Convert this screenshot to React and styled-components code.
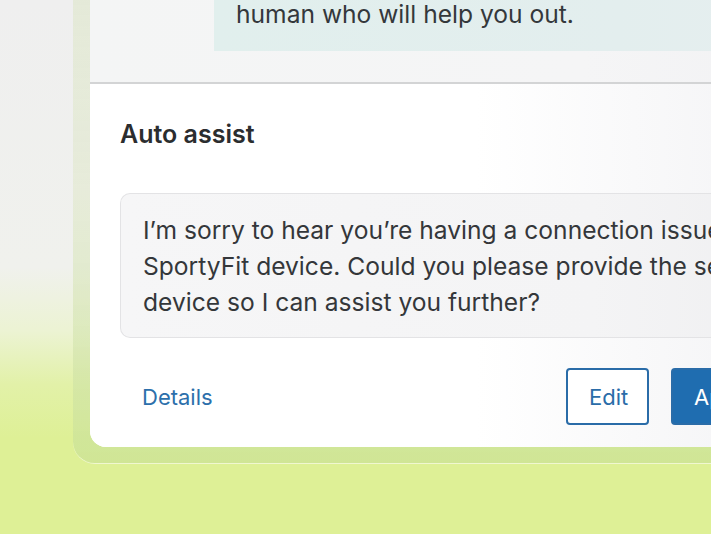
import React from "react";
import styled, { createGlobalStyle } from "styled-components";

const Global = createGlobalStyle`
  html, body { margin: 0; padding: 0; }
  body { font-family: Inter, "Noto Sans", sans-serif; color: #2f3133; }
`;

const Page = styled.div`
  width: 711px;
  height: 534px;
  overflow: hidden;
  display: flex;
  align-items: flex-end;
  box-sizing: border-box;
  padding: 0 0 70px 73px;
  background: linear-gradient(180deg, #efefef 0%, #f0f1ed 50%, #ecf3d3 62%, #e2f1a8 72%, #def096 82%, #def096 100%);
`;

const Frame = styled.div`
  flex-shrink: 0;
  width: 720px;
  box-sizing: border-box;
  padding: 0 0 16px 17px;
  border-bottom-left-radius: 22px;
  background: linear-gradient(180deg, rgba(222, 230, 205, 0.7) 0%, rgba(225, 232, 205, 0.6) 50%, rgba(200, 224, 150, 0.65) 100%);
  border-bottom: 1.5px solid rgba(240, 248, 210, 0.95);
`;

const Card = styled.div`
  background: #fff;
  border-bottom-left-radius: 16px;
  overflow: hidden;
  display: flex;
  flex-direction: column;
`;

const Conversation = styled.div`
  background: linear-gradient(90deg, #f4f5f5 0%, #f5f5f6 70%, #f2f2f4 100%);
  padding: 0 0 31px 124px;
  border-bottom: 2px solid #d3d4d5;
`;

const Bubble = styled.div`
  background: linear-gradient(90deg, #e1efed 0%, #e3eeee 70%, #e6eeef 100%);
  padding: 14px 22px 20px;
  font-size: 24.6px;
  line-height: 34px;
  color: #34383b;
`;

const Assist = styled.div`
  background: linear-gradient(90deg, #ffffff 0%, #ffffff 55%, #f3f3f5 100%);
  padding: 35px 0 22px 30px;
  display: flex;
  flex-direction: column;
`;

const Title = styled.h2`
  margin: 0;
  font-size: 25px;
  line-height: 30px;
  font-weight: 600;
  color: #2b2d2f;
`;

const Suggestion = styled.div`
  margin-top: 44px;
  background: linear-gradient(90deg, #f6f6f7 0%, #f4f4f5 70%, #efeff1 100%);
  border: 1px solid #e3e3e5;
  border-right: none;
  border-radius: 10px 0 0 10px;
  padding: 18px 0 17px 22px;
  font-size: 24.6px;
  line-height: 36px;
  color: #34373a;
  white-space: nowrap;
`;

const Actions = styled.div`
  margin-top: 30px;
  display: flex;
  align-items: center;
  padding-left: 22px;
`;

const LinkButton = styled.button`
  border: none;
  background: none;
  padding: 0;
  font-family: inherit;
  font-size: 22px;
  color: #2c6fab;
  cursor: pointer;
`;

const Spacer = styled.div`
  flex: 1;
`;

const Button = styled.button`
  font-family: inherit;
  font-size: 22px;
  height: 57px;
  box-sizing: border-box;
  border-radius: 4px;
  padding: 0 21px;
  cursor: pointer;
  border: 2px solid #2a6ca8;
  background: ${(p) => (p.$primary ? "#1f6db0" : "#fff")};
  color: ${(p) => (p.$primary ? "#fff" : "#2a6ca8")};
  width: ${(p) => p.$width}px;
  margin-left: ${(p) => p.$gap || 0}px;
  text-align: left;
`;

export default function App() {
  return (
    <>
      <Global />
      <Page>
        <Frame>
          <Card>
            <Conversation>
              <Bubble>
                I'll connect you with a member of our support team, a
                <br />
                human who will help you out.
              </Bubble>
            </Conversation>
            <Assist>
              <Title>Auto assist</Title>
              <Suggestion>
                I’m sorry to hear you’re having a connection issue with your
                <br />
                SportyFit device. Could you please provide the serial number of your
                <br />
                device so I can assist you further?
              </Suggestion>
              <Actions>
                <LinkButton>Details</LinkButton>
                <Spacer />
                <Button $width={83}>Edit</Button>
                <Button $primary $width={122} $gap={22}>Apply</Button>
              </Actions>
            </Assist>
          </Card>
        </Frame>
      </Page>
    </>
  );
}
